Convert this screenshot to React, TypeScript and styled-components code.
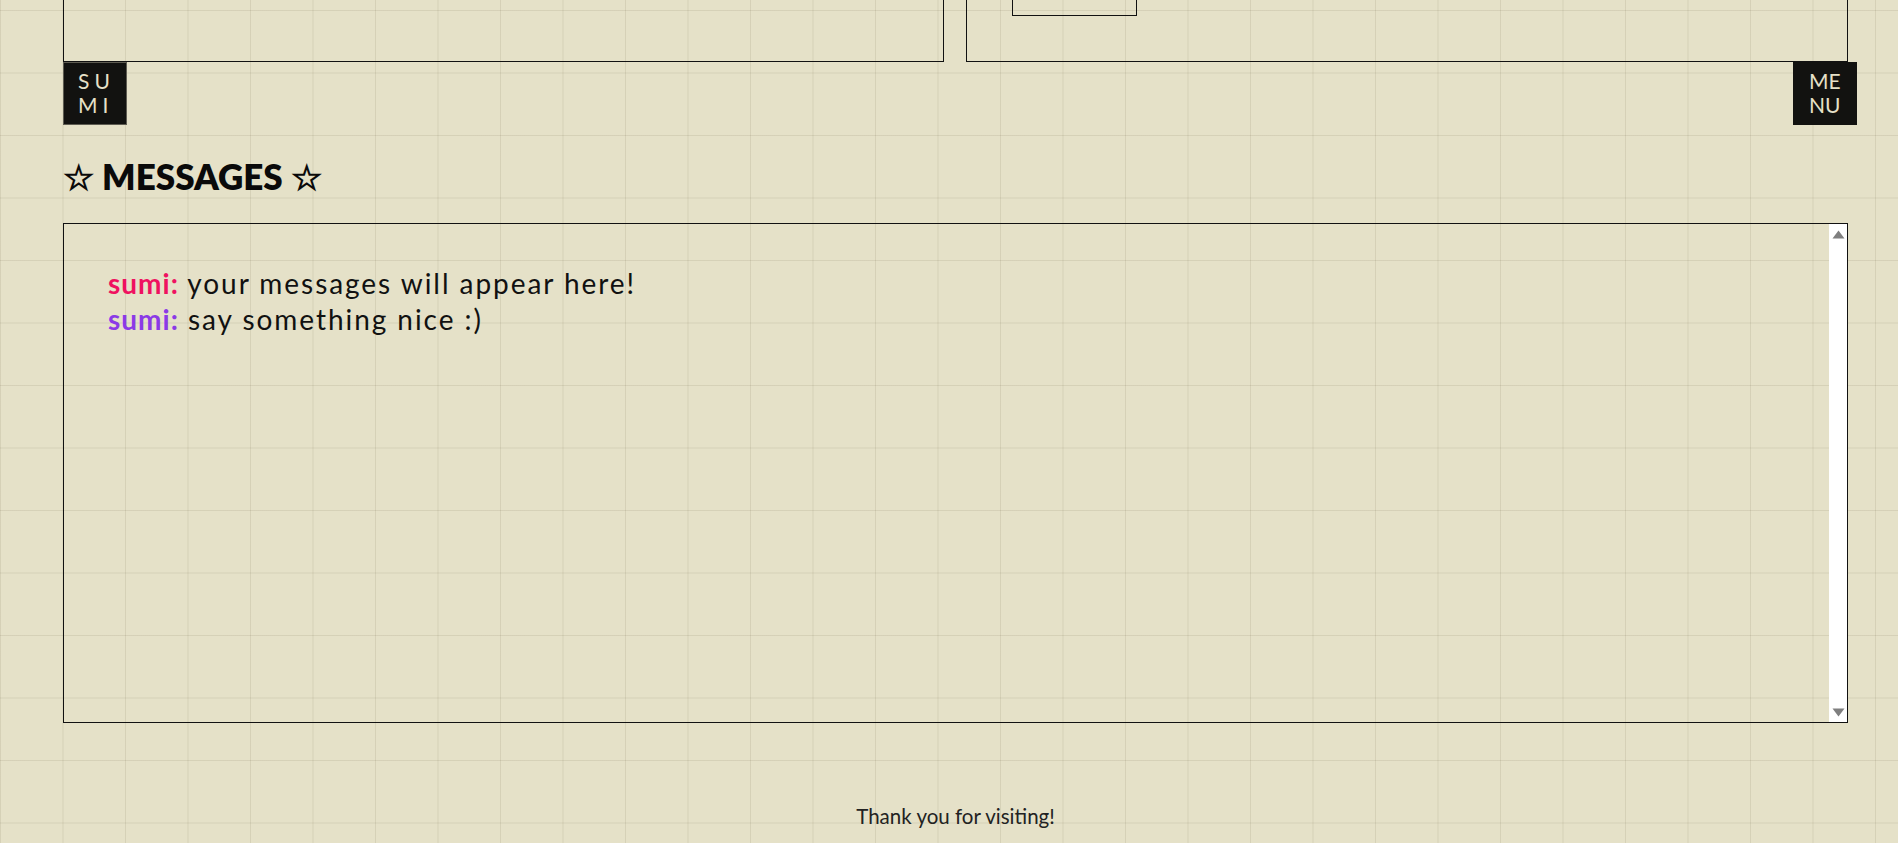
import React from "react";
import styled, { createGlobalStyle } from "styled-components";

const Global = createGlobalStyle`
  html, body {
    margin: 0;
    padding: 0;
  }
  body {
    min-height: 843px;
    background-color: #e5e1c8;
    background-image:
      linear-gradient(rgba(120, 110, 80, 0.14) 1px, transparent 1px),
      linear-gradient(90deg, rgba(120, 110, 80, 0.14) 1px, transparent 1px);
    background-size: 62.5px 62.5px;
    background-position: 0 10px;
    font-family: "Lato", "Open Sans", sans-serif;
    color: #111;
    overflow: hidden;
  }
`;

const Page = styled.div`
  width: 1785px;
  margin-left: 63px;
  display: flex;
  flex-direction: column;
`;

const Panels = styled.div`
  display: grid;
  grid-template-columns: 881px 882px;
  column-gap: 22px;
  height: 62px;
`;

const Panel = styled.div`
  border: 1px solid #111;
  border-top: none;
  box-sizing: border-box;
  height: 62px;
  padding-left: 45px;
`;

const InnerBox = styled.div`
  width: 125px;
  height: 16px;
  border: 1px solid #111;
  border-top: none;
  box-sizing: border-box;
`;

const BadgeRow = styled.div`
  display: flex;
  justify-content: space-between;
  height: 62px;
`;

const Badge = styled.div<{ $spaced?: boolean; $outlined?: boolean }>`
  width: 64px;
  height: 63px;
  box-sizing: border-box;
  background: #121210;
  border: 1px solid ${(p) => (p.$outlined ? "#5e5c52" : "#121210")};
  color: #e6e1c8;
  font-size: 21px;
  line-height: 24px;
  letter-spacing: ${(p) => (p.$spaced ? "5px" : "0")};
  padding-left: ${(p) => (p.$spaced ? "14px" : "15px")};
  padding-top: 6px;
  display: flex;
  flex-direction: column;
  margin-right: ${(p) => (p.$spaced ? "0" : "-9px")};
`;

const Heading = styled.h2`
  margin: 31px 0 25px;
  font-size: 35px;
  line-height: 43px;
  font-weight: 800;
  color: #0a0a0a;
`;

const MessageBox = styled.div`
  height: 500px;
  box-sizing: border-box;
  border: 1px solid #111;
  display: flex;
`;

const MessageList = styled.div`
  flex: 1;
  padding: 41px 0 0 44px;
`;

const ScrollTrack = styled.div`
  width: 18px;
  background: #ffffff;
  display: flex;
  flex-direction: column;
  justify-content: space-between;
  align-items: center;
  padding: 6px 0 5px;
`;

const Arrow = styled.svg`
  display: block;
  width: 13px;
  height: 9px;
`;

const Line = styled.div`
  font-size: 28px;
  line-height: 36px;
  letter-spacing: 1.95px;
  color: #111;
`;

const Name = styled.span<{ $color: string }>`
  font-weight: 700;
  letter-spacing: 1px;
  color: ${(p) => p.$color};
`;

const Footer = styled.div`
  margin-top: 81px;
  text-align: center;
  font-size: 20.5px;
  line-height: 24px;
  color: #222;
`;

export default function App() {
  return (
    <>
      <Global />
      <Page>
        <Panels>
          <Panel />
          <Panel>
            <InnerBox />
          </Panel>
        </Panels>
        <BadgeRow>
          <Badge $spaced $outlined>
            <span>SU</span>
            <span>MI</span>
          </Badge>
          <Badge>
            <span>ME</span>
            <span>NU</span>
          </Badge>
        </BadgeRow>
        <Heading>☆ MESSAGES ☆</Heading>
        <MessageBox>
          <MessageList>
            <Line>
              <Name $color="#ef1160">sumi:</Name> your messages will appear here!
            </Line>
            <Line>
              <Name $color="#8b3ae6">sumi:</Name> say something nice :)
            </Line>
          </MessageList>
          <ScrollTrack>
            <Arrow viewBox="0 0 13 9">
              <polygon points="6.5,0.5 12.5,8.5 0.5,8.5" fill="#7f7f7f" />
            </Arrow>
            <Arrow viewBox="0 0 13 9">
              <polygon points="0.5,0.5 12.5,0.5 6.5,8.5" fill="#7f7f7f" />
            </Arrow>
          </ScrollTrack>
        </MessageBox>
        <Footer>Thank you for visiting!</Footer>
      </Page>
    </>
  );
}
